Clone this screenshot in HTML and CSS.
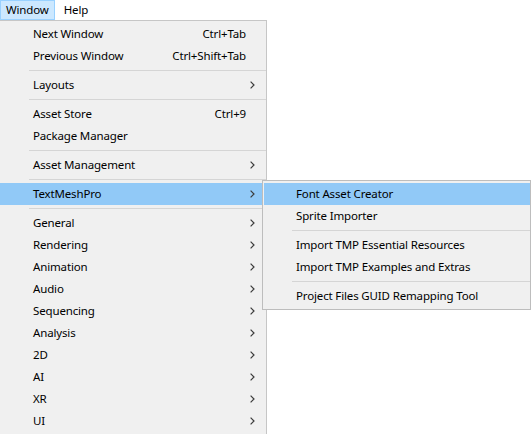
FILE: index.html
```html
<!DOCTYPE html>
<html lang="en">
<head>
  <meta charset="UTF-8" />
  <title>Window menu</title>
  <link rel="stylesheet" href="styles.css">
</head>
<body>
  <div class="screen">

    <!-- Menu bar -->
    <div class="menubar">
      <span class="menubar-item active">Window</span>
      <span class="menubar-item">Help</span>
    </div>

    <!-- Window menu -->
    <div class="menu main-menu">
      <div class="item"><span class="label">Next Window</span><span class="shortcut">Ctrl+Tab</span><span class="arrow"></span></div>
      <div class="item"><span class="label">Previous Window</span><span class="shortcut">Ctrl+Shift+Tab</span><span class="arrow"></span></div>
      <div class="sep"></div>
      <div class="item"><span class="label">Layouts</span><span class="arrow"><svg width="5" height="8" viewBox="0 0 5 8"><path d="M0.6 0.6 L4 4 L0.6 7.4" /></svg></span></div>
      <div class="sep"></div>
      <div class="item"><span class="label">Asset Store</span><span class="shortcut">Ctrl+9</span><span class="arrow"></span></div>
      <div class="item"><span class="label">Package Manager</span><span class="arrow"></span></div>
      <div class="sep"></div>
      <div class="item"><span class="label">Asset Management</span><span class="arrow"><svg width="5" height="8" viewBox="0 0 5 8"><path d="M0.6 0.6 L4 4 L0.6 7.4" /></svg></span></div>
      <div class="sep"></div>
      <div class="item selected"><span class="label">TextMeshPro</span><span class="arrow"><svg width="5" height="8" viewBox="0 0 5 8"><path d="M0.6 0.6 L4 4 L0.6 7.4" /></svg></span></div>
      <div class="sep"></div>
      <div class="item"><span class="label">General</span><span class="arrow"><svg width="5" height="8" viewBox="0 0 5 8"><path d="M0.6 0.6 L4 4 L0.6 7.4" /></svg></span></div>
      <div class="item"><span class="label">Rendering</span><span class="arrow"><svg width="5" height="8" viewBox="0 0 5 8"><path d="M0.6 0.6 L4 4 L0.6 7.4" /></svg></span></div>
      <div class="item"><span class="label">Animation</span><span class="arrow"><svg width="5" height="8" viewBox="0 0 5 8"><path d="M0.6 0.6 L4 4 L0.6 7.4" /></svg></span></div>
      <div class="item"><span class="label">Audio</span><span class="arrow"><svg width="5" height="8" viewBox="0 0 5 8"><path d="M0.6 0.6 L4 4 L0.6 7.4" /></svg></span></div>
      <div class="item"><span class="label">Sequencing</span><span class="arrow"><svg width="5" height="8" viewBox="0 0 5 8"><path d="M0.6 0.6 L4 4 L0.6 7.4" /></svg></span></div>
      <div class="item"><span class="label">Analysis</span><span class="arrow"><svg width="5" height="8" viewBox="0 0 5 8"><path d="M0.6 0.6 L4 4 L0.6 7.4" /></svg></span></div>
      <div class="item"><span class="label">2D</span><span class="arrow"><svg width="5" height="8" viewBox="0 0 5 8"><path d="M0.6 0.6 L4 4 L0.6 7.4" /></svg></span></div>
      <div class="item"><span class="label">AI</span><span class="arrow"><svg width="5" height="8" viewBox="0 0 5 8"><path d="M0.6 0.6 L4 4 L0.6 7.4" /></svg></span></div>
      <div class="item"><span class="label">XR</span><span class="arrow"><svg width="5" height="8" viewBox="0 0 5 8"><path d="M0.6 0.6 L4 4 L0.6 7.4" /></svg></span></div>
      <div class="item"><span class="label">UI</span><span class="arrow"><svg width="5" height="8" viewBox="0 0 5 8"><path d="M0.6 0.6 L4 4 L0.6 7.4" /></svg></span></div>
    </div>

    <!-- TextMeshPro submenu -->
    <div class="menu sub-menu">
      <div class="item selected"><span class="label">Font Asset Creator</span></div>
      <div class="item"><span class="label">Sprite Importer</span></div>
      <div class="sep"></div>
      <div class="item"><span class="label">Import TMP Essential Resources</span></div>
      <div class="item"><span class="label">Import TMP Examples and Extras</span></div>
      <div class="sep"></div>
      <div class="item"><span class="label">Project Files GUID Remapping Tool</span></div>
    </div>

  </div>
</body>
</html>
```

FILE: styles.css
```css
body {
  margin: 0;
  padding: 0;
  background-color: #fff;
  font-family: "Segoe UI", "Noto Sans", sans-serif;
  font-size: 11.5px;
  letter-spacing: -0.15px;
  color: #000;
}

.screen {
  position: relative;
  width: 531px;
  height: 434px;
  overflow: hidden;
}

/* Menu bar */
.menubar {
  display: flex;
  height: 20px;
  background-color: #fff;
}

.menubar-item {
  display: flex;
  align-items: center;
  padding: 0 5px 1px;
  height: 19px;
  border: 1px solid transparent;
  border-bottom: none;
  box-sizing: border-box;
  margin-right: 3px;
}

.menubar-item.active {
  background-color: #cce8ff;
  border-color: #99d1ff;
  border-bottom: 1px solid #99d1ff;
  height: 20px;
}

/* Menus */
.menu {
  background-color: #f0f0f0;
  border: 1px solid #c6c6c6;
  box-sizing: border-box;
  padding: 2px 0;
}

.main-menu {
  width: 268px;
  margin-left: -1px;
}

.sub-menu {
  position: absolute;
  top: 180px;
  left: 262px;
  width: 269px;
  padding-left: 1px;
  border-color: #bdbdbd;
}

.item {
  display: flex;
  align-items: center;
  height: 22px;
  padding-left: 33px;
  padding-bottom: 2px;
  box-sizing: border-box;
}

.sub-menu .item {
  padding-left: 32px;
}

.item.selected {
  background-color: #91c9f7;
}

.item .label {
  flex: 1;
  white-space: nowrap;
}

.item .shortcut {
  white-space: nowrap;
}

.item .arrow {
  display: flex;
  align-items: center;
  width: 20px;
  height: 20px;
  padding-left: 4px;
  padding-top: 2px;
  box-sizing: border-box;
}

.item .arrow svg path {
  fill: none;
  stroke: #3c3c3c;
  stroke-width: 1.2;
}

.sep {
  height: 1px;
  margin: 3px 0 3px 29px;
  background-color: #d5d5d5;
}

.sub-menu .sep {
  margin-left: 28px;
}
```
